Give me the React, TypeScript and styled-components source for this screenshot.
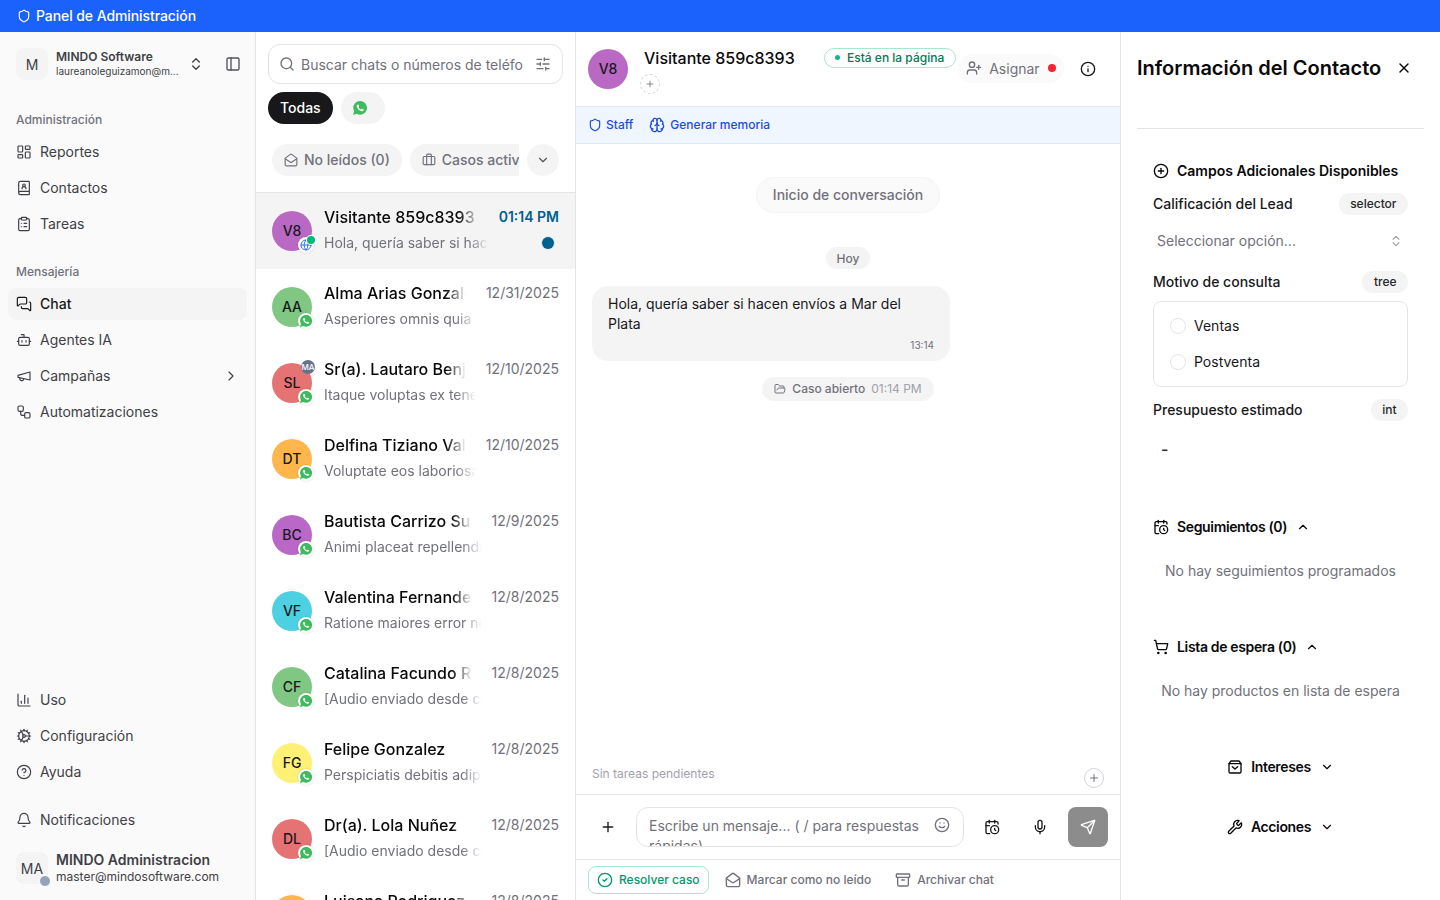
import React from "react";
import styled, { createGlobalStyle } from "styled-components";
import {
  Archive,
  Bell,
  Bot,
  BookUser,
  Brain,
  Briefcase,
  CalendarClock,
  ChartColumn,
  ChevronDown,
  ChevronRight,
  ChevronUp,
  ChevronsUpDown,
  CircleCheck,
  CircleHelp,
  CirclePlus,
  ClipboardList,
  Cog,
  FolderOpen,
  Globe,
  Info,
  LayoutDashboard,
  MailOpen,
  MessagesSquare,
  Mic,
  PanelLeft,
  Plus,
  Search,
  Send,
  Shield,
  ShoppingCart,
  SlidersHorizontal,
  Smile,
  UserPlus,
  Workflow,
  Wrench,
  X,
} from "lucide-react";
import { IoLogoWhatsapp } from "react-icons/io";

const GlobalStyle = createGlobalStyle`
  html, body {
    margin: 0;
    padding: 0;
    height: 100%;
    overflow: hidden;
    background: #fff;
    font-family: Inter, "Liberation Sans", sans-serif;
    color: #09090b;
  }
  * { box-sizing: border-box; }
`;

const chats = [
  { initials: "V8", color: "#b968c4", name: "Visitante 859c8393", preview: "Hola, quería saber si hacen envíos a Mar del Plata", date: "01:14 PM", active: true },
  { initials: "AA", color: "#81c784", name: "Alma Arias Gonzalez", preview: "Asperiores omnis quia dolorem", date: "12/31/2025" },
  { initials: "SL", color: "#e57373", name: "Sr(a). Lautaro Benjamín", preview: "Itaque voluptas ex tenetur sint", date: "12/10/2025", agent: true },
  { initials: "DT", color: "#ffb74d", name: "Delfina Tiziano Valdez", preview: "Voluptate eos laboriosam quod", date: "12/10/2025" },
  { initials: "BC", color: "#ba68c8", name: "Bautista Carrizo Suárez", preview: "Animi placeat repellendus nemo", date: "12/9/2025" },
  { initials: "VF", color: "#4dd0e1", name: "Valentina Fernandez", preview: "Ratione maiores error nobis quia", date: "12/8/2025" },
  { initials: "CF", color: "#81c784", name: "Catalina Facundo Ruiz", preview: "[Audio enviado desde chat]", date: "12/8/2025" },
  { initials: "FG", color: "#fff176", name: "Felipe Gonzalez", preview: "Perspiciatis debitis adipisci sit", date: "12/8/2025" },
  { initials: "DL", color: "#e57373", name: "Dr(a). Lola Nuñez", preview: "[Audio enviado desde chat]", date: "12/8/2025" },
  { initials: "LR", color: "#ffb74d", name: "Luisana Rodriguez", preview: "Quasi rerum dolores", date: "12/8/2025" },
];

const NAV_STROKE = 1.75;

const MegaphoneIcon: React.FC = () => (
  <svg width="16" height="16" viewBox="0 0 24 24" fill="none" stroke="currentColor" strokeWidth={NAV_STROKE} strokeLinecap="round" strokeLinejoin="round">
    <path d="m3 11 18-5v12L3 14v-3z" />
    <path d="M11.6 16.8a3 3 0 1 1-5.8-1.6" />
  </svg>
);

const BagIcon: React.FC = () => (
  <svg width="16" height="16" viewBox="0 0 24 24" fill="none" stroke="currentColor" strokeWidth="2" strokeLinecap="round" strokeLinejoin="round">
    <path d="M6 3h12l3 4v12a2 2 0 0 1-2 2H5a2 2 0 0 1-2-2V7z" />
    <path d="M3 7h18" />
    <path d="M8 11.5l4 3.5 4-3.5" />
  </svg>
);

const App: React.FC = () => (
  <>
    <GlobalStyle />
    <Page>
      <TopBar>
        <Shield size={14} strokeWidth={2} />
        Panel de Administración
      </TopBar>
      <Columns>
        <Sidebar>
          <AccountRow>
            <SquareAvatar>M</SquareAvatar>
            <AccountText>
              <AccountName>MINDO Software</AccountName>
              <AccountMail>laureanoleguizamon@m...</AccountMail>
            </AccountText>
            <ChevronsUpDown size={16} color="#3f3f46" />
            <PanelButton>
              <PanelLeft size={16} color="#52525b" />
            </PanelButton>
          </AccountRow>

          <SectionLabel>Administración</SectionLabel>
          <NavItem><LayoutDashboard size={16} strokeWidth={NAV_STROKE} />Reportes</NavItem>
          <NavItem><BookUser size={16} strokeWidth={NAV_STROKE} />Contactos</NavItem>
          <NavItem><ClipboardList size={16} strokeWidth={NAV_STROKE} />Tareas</NavItem>

          <SectionLabel $gap={12}>Mensajería</SectionLabel>
          <NavItem $active><MessagesSquare size={16} strokeWidth={NAV_STROKE} />Chat</NavItem>
          <NavItem><Bot size={16} strokeWidth={NAV_STROKE} />Agentes IA</NavItem>
          <NavItem>
            <MegaphoneIcon />
            Campañas
            <NavChevron><ChevronRight size={16} strokeWidth={NAV_STROKE} /></NavChevron>
          </NavItem>
          <NavItem><Workflow size={16} strokeWidth={NAV_STROKE} />Automatizaciones</NavItem>

          <Spacer />

          <NavItem><ChartColumn size={16} strokeWidth={NAV_STROKE} />Uso</NavItem>
          <NavItem><Cog size={16} strokeWidth={NAV_STROKE} />Configuración</NavItem>
          <NavItem><CircleHelp size={16} strokeWidth={NAV_STROKE} />Ayuda</NavItem>
          <NavItem $gapTop={12}><Bell size={16} strokeWidth={NAV_STROKE} />Notificaciones</NavItem>

          <UserRow>
            <SquareAvatar>
              MA
              <PresenceDot />
            </SquareAvatar>
            <AccountText>
              <UserName>MINDO Administracion</UserName>
              <UserMail>master@mindosoftware.com</UserMail>
            </AccountText>
          </UserRow>
        </Sidebar>

        <ChatList>
          <ListTop>
            <SearchBox>
              <Search size={16} color="#71717a" />
              <SearchText>Buscar chats o números de teléfono</SearchText>
              <SlidersHorizontal size={16} color="#71717a" />
            </SearchBox>
            <ChannelRow>
              <ChannelPill $active>Todas</ChannelPill>
              <ChannelPill>
                <WhatsappMark><IoLogoWhatsapp size={16} color="#3fba5f" /></WhatsappMark>
              </ChannelPill>
            </ChannelRow>
            <FilterRow>
              <FilterScroll>
                <FilterPill><MailOpen size={14} />No leídos (0)</FilterPill>
                <FilterPill><Briefcase size={14} />Casos activos (1)</FilterPill>
              </FilterScroll>
              <RoundButton><ChevronDown size={14} /></RoundButton>
            </FilterRow>
          </ListTop>
          <Rows>
            {chats.map((chat) => (
              <ChatRow key={chat.initials + chat.name} $active={chat.active}>
                <Avatar $color={chat.color} $size={40}>
                  {chat.initials}
                  {chat.agent && <AgentBadge>MA</AgentBadge>}
                  <ChannelBadge>
                    {chat.active ? (
                      <Globe size={12} color="#2f6fed" />
                    ) : (
                      <IoLogoWhatsapp size={14} color="#3fba5f" />
                    )}
                  </ChannelBadge>
                  {chat.active && <OnlineDot />}
                </Avatar>
                <RowText>
                  <RowName>{chat.name}</RowName>
                  <RowPreview>{chat.preview}</RowPreview>
                </RowText>
                <RowMeta>
                  <RowDate $active={chat.active}>{chat.date}</RowDate>
                  {chat.active && <UnreadDot />}
                </RowMeta>
              </ChatRow>
            ))}
          </Rows>
        </ChatList>

        <Conversation>
          <ConvHeader>
            <Avatar $color="#b968c4" $size={40}>V8</Avatar>
            <ConvTitle>
              <ConvName>Visitante 859c8393</ConvName>
              <AddTag><Plus size={10} /></AddTag>
            </ConvTitle>
            <PresenceBadge><GreenDot />Está en la página</PresenceBadge>
            <AssignPill>
              <UserPlus size={16} />
              Asignar
              <RedDot />
            </AssignPill>
            <InfoButton><Info size={16} /></InfoButton>
          </ConvHeader>
          <StaffBar>
            <StaffLink><Shield size={14} />Staff</StaffLink>
            <StaffLink><Brain size={16} />Generar memoria</StaffLink>
          </StaffBar>
          <Messages>
            <StartPill>Inicio de conversación</StartPill>
            <DayPill>Hoy</DayPill>
            <Bubble>
              Hola, quería saber si hacen envíos a Mar del Plata
              <BubbleTime>13:14</BubbleTime>
            </Bubble>
            <CasePill>
              <FolderOpen size={12} />
              Caso abierto
              <CaseTime>01:14 PM</CaseTime>
            </CasePill>
          </Messages>
          <TasksBar>
            Sin tareas pendientes
            <TaskAdd><Plus size={12} /></TaskAdd>
          </TasksBar>
          <Composer>
            <ComposerIcon $width={40}><Plus size={16} /></ComposerIcon>
            <MessageBox>
              <MessageText>Escribe un mensaje... ( / para respuestas rápidas)</MessageText>
              <SmileSlot><Smile size={16} color="#71717a" /></SmileSlot>
            </MessageBox>
            <ComposerIcon $width={48}><CalendarClock size={16} /></ComposerIcon>
            <ComposerIcon $width={48}><Mic size={16} /></ComposerIcon>
            <SendButton><Send size={16} /></SendButton>
          </Composer>
          <ActionsBar>
            <ResolveButton><CircleCheck size={16} />Resolver caso</ResolveButton>
            <PlainAction><MailOpen size={16} />Marcar como no leído</PlainAction>
            <PlainAction><Archive size={16} />Archivar chat</PlainAction>
          </ActionsBar>
        </Conversation>

        <ContactPanel>
          <PanelHead>
            <PanelTitle>Información del Contacto</PanelTitle>
            <X size={16} />
          </PanelHead>
          <PanelBody>
            <BlockTitle $top={32}><CirclePlus size={16} />Campos Adicionales Disponibles</BlockTitle>

            <FieldHead $top={12}>Calificación del Lead<TypeTag>selector</TypeTag></FieldHead>
            <SelectRow>
              Seleccionar opción...
              <ChevronsUpDown size={14} color="#a1a1aa" />
            </SelectRow>

            <FieldHead $top={12}>Motivo de consulta<TypeTag>tree</TypeTag></FieldHead>
            <TreeBox>
              <TreeOption><Radio />Ventas</TreeOption>
              <TreeOption><Radio />Postventa</TreeOption>
            </TreeBox>

            <FieldHead $top={12}>Presupuesto estimado<TypeTag>int</TypeTag></FieldHead>
            <FieldValue>-</FieldValue>

            <BlockTitle $top={58} $tight>
              <CalendarClock size={16} />Seguimientos (0)<ChevronUp size={14} />
            </BlockTitle>
            <EmptyNote>No hay seguimientos programados</EmptyNote>

            <BlockTitle $top={56} $tight>
              <ShoppingCart size={16} />Lista de espera (0)<ChevronUp size={14} />
            </BlockTitle>
            <EmptyNote>No hay productos en lista de espera</EmptyNote>

            <BlockTitle $top={56} $center $tight>
              <BagIcon />Intereses<ChevronDown size={14} />
            </BlockTitle>
            <BlockTitle $top={40} $center $tight>
              <Wrench size={16} />Acciones<ChevronDown size={14} />
            </BlockTitle>
          </PanelBody>
        </ContactPanel>
      </Columns>
    </Page>
  </>
);

const Page = styled.div`
  width: 100%;
  height: 100vh;
  display: flex;
  flex-direction: column;
  overflow: hidden;
`;

const TopBar = styled.div`
  height: 32px;
  flex: none;
  display: flex;
  align-items: center;
  gap: 5px;
  padding: 0 16px 1px 17px;
  background: #1a62fb;
  color: #fff;
  font-size: 14px;
  font-weight: 500;
  letter-spacing: -0.08px;
`;

const Columns = styled.div`
  flex: 1;
  min-height: 0;
  display: flex;
`;

const Sidebar = styled.aside`
  width: 256px;
  flex: none;
  display: flex;
  flex-direction: column;
  padding: 16px 8px;
  background: #fafafa;
  border-right: 1px solid #e4e4e7;
`;

const AccountRow = styled.div`
  height: 32px;
  flex: none;
  display: flex;
  align-items: center;
  gap: 8px;
  padding: 0 8px;
  margin-bottom: 24px;
`;

const SquareAvatar = styled.div`
  position: relative;
  width: 32px;
  height: 32px;
  flex: none;
  display: flex;
  align-items: center;
  justify-content: center;
  border-radius: 8px;
  background: #f4f4f5;
  font-size: 14px;
  color: #3f3f46;
`;

const AccountText = styled.div`
  flex: 1;
  min-width: 0;
  display: flex;
  flex-direction: column;
`;

const AccountName = styled.div`
  font-size: 12px;
  line-height: 14px;
  font-weight: 600;
  color: #3f3f46;
`;

const AccountMail = styled.div`
  font-size: 10px;
  line-height: 14px;
  color: #3f3f46;
  white-space: nowrap;
`;

const PanelButton = styled.div`
  width: 16px;
  height: 16px;
  margin-left: 13px;
  margin-right: -2px;
`;

const SectionLabel = styled.div<{ $gap?: number }>`
  height: 32px;
  flex: none;
  display: flex;
  align-items: center;
  padding: 0 8px 2px;
  margin-top: ${(p) => p.$gap ?? 0}px;
  font-size: 12px;
  font-weight: 500;
  color: #71717a;
`;

const NavItem = styled.div<{ $active?: boolean; $gapTop?: number }>`
  height: 32px;
  flex: none;
  display: flex;
  align-items: center;
  gap: 8px;
  padding: 0 8px 1px;
  margin-bottom: 4px;
  margin-top: ${(p) => p.$gapTop ?? 0}px;
  border-radius: 8px;
  font-size: 14px;
  font-weight: ${(p) => (p.$active ? 500 : 400)};
  color: ${(p) => (p.$active ? "#18181b" : "#3f3f46")};
  background: ${(p) => (p.$active ? "#f4f4f5" : "transparent")};
`;

const NavChevron = styled.span`
  display: flex;
  margin-left: auto;
`;

const Spacer = styled.div`
  flex: 1;
`;

const UserRow = styled.div`
  display: flex;
  align-items: center;
  gap: 8px;
  padding: 0 8px;
  margin: 12px 0 0;
  height: 32px;
`;

const UserName = styled.div`
  font-size: 14px;
  line-height: 18px;
  font-weight: 600;
  color: #3f3f46;
  white-space: nowrap;
`;

const UserMail = styled.div`
  font-size: 12px;
  line-height: 16px;
  color: #3f3f46;
  white-space: nowrap;
`;

const PresenceDot = styled.span`
  position: absolute;
  right: -3px;
  bottom: -3px;
  width: 12px;
  height: 12px;
  border-radius: 50%;
  background: #94a3b8;
  border: 1px solid #fff;
`;

const ChatList = styled.section`
  width: 320px;
  flex: none;
  display: flex;
  flex-direction: column;
  border-right: 1px solid #e4e4e7;
`;

const ListTop = styled.div`
  height: 161px;
  flex: none;
  padding: 12px 12px 0;
  border-bottom: 1px solid #e4e4e7;
`;

const SearchBox = styled.div`
  width: 295px;
  height: 40px;
  display: flex;
  align-items: center;
  gap: 6px;
  padding: 0 11px 0 10px;
  border: 1px solid #e4e4e7;
  border-radius: 12px;
`;

const SearchText = styled.div`
  flex: 1;
  min-width: 0;
  overflow: hidden;
  white-space: nowrap;
  font-size: 14px;
  color: #71717a;
  margin-right: 6px;
`;

const ChannelRow = styled.div`
  display: flex;
  gap: 8px;
  margin-top: 8px;
`;

const ChannelPill = styled.div<{ $active?: boolean }>`
  height: 32px;
  min-width: 44px;
  display: flex;
  align-items: center;
  justify-content: center;
  padding: 0 12px 1px;
  border-radius: 16px;
  font-size: 14px;
  font-weight: 500;
  color: ${(p) => (p.$active ? "#fff" : "#3f3f46")};
  background: ${(p) => (p.$active ? "#18181b" : "#f4f4f5")};
`;

const WhatsappMark = styled.span`
  display: flex;
  margin: 0 5px 0 -1px;
`;

const FilterRow = styled.div`
  display: flex;
  align-items: center;
  gap: 8px;
  margin: 20px 4px 0;
`;

const FilterScroll = styled.div`
  width: 247px;
  display: flex;
  gap: 8px;
  overflow: hidden;
`;

const FilterPill = styled.div`
  height: 32px;
  flex: none;
  display: flex;
  align-items: center;
  gap: 6px;
  padding: 0 12px 1px;
  border-radius: 16px;
  background: #f4f4f5;
  font-size: 14px;
  font-weight: 500;
  color: #71717a;
  white-space: nowrap;
`;

const RoundButton = styled.div`
  width: 32px;
  height: 32px;
  flex: none;
  display: flex;
  align-items: center;
  justify-content: center;
  border-radius: 50%;
  background: #f4f4f5;
  color: #52525b;
`;

const Rows = styled.div`
  flex: 1;
  min-height: 0;
  overflow: hidden;
`;

const ChatRow = styled.div<{ $active?: boolean }>`
  height: 76px;
  display: flex;
  align-items: flex-start;
  padding: 18px 16px 0;
  gap: 12px;
  background: ${(p) => (p.$active ? "#f4f4f5" : "#fff")};
`;

const Avatar = styled.div<{ $color: string; $size: number }>`
  position: relative;
  width: ${(p) => p.$size}px;
  height: ${(p) => p.$size}px;
  flex: none;
  display: flex;
  align-items: center;
  justify-content: center;
  padding-bottom: 1px;
  border-radius: 50%;
  background: ${(p) => p.$color};
  font-size: 14px;
  font-weight: 500;
  color: #18181b;
`;

const ChannelBadge = styled.span`
  position: absolute;
  right: -2px;
  bottom: -2px;
  width: 16px;
  height: 16px;
  display: flex;
  align-items: center;
  justify-content: center;
  border-radius: 50%;
  background: #fff;
  box-shadow: 0 0 2px rgba(0, 0, 0, 0.2);
`;

const OnlineDot = styled.span`
  position: absolute;
  right: -3px;
  bottom: 7px;
  width: 8px;
  height: 8px;
  border-radius: 50%;
  background: #00b878;
  box-shadow: 0 0 0 1px #fff;
`;

const AgentBadge = styled.span`
  position: absolute;
  right: -3px;
  top: -3px;
  width: 14px;
  height: 14px;
  display: flex;
  align-items: center;
  justify-content: center;
  border-radius: 50%;
  background: #64748b;
  color: #fff;
  font-size: 8px;
  font-weight: 500;
`;

const RowText = styled.div`
  flex: 1;
  min-width: 0;
  margin-top: -6px;
`;

const fade = `
  white-space: nowrap;
  overflow: hidden;
  -webkit-mask-image: linear-gradient(to right, #000 calc(100% - 20px), transparent);
  mask-image: linear-gradient(to right, #000 calc(100% - 20px), transparent);
`;

const RowName = styled.div`
  ${fade}
  margin-right: 10px;
  font-size: 16px;
  line-height: 24px;
  font-weight: 500;
  color: #09090b;
`;

const RowPreview = styled.div`
  ${fade}
  margin-top: 4px;
  font-size: 14px;
  line-height: 20px;
  color: #71717a;
`;

const RowMeta = styled.div`
  flex: none;
  display: flex;
  flex-direction: column;
  align-items: flex-end;
  margin: -4px 0 0 -2px;
`;

const RowDate = styled.div<{ $active?: boolean }>`
  font-size: 14px;
  line-height: 20px;
  font-weight: ${(p) => (p.$active ? 600 : 400)};
  color: ${(p) => (p.$active ? "#005f8c" : "#71717a")};
`;

const UnreadDot = styled.span`
  width: 12px;
  height: 12px;
  margin: 10px 5px 0 0;
  border-radius: 50%;
  background: #005f8c;
  box-shadow: 0 0 0 1px #dbe7ef;
`;

const Conversation = styled.main`
  width: 544px;
  flex: none;
  display: flex;
  flex-direction: column;
`;

const ConvHeader = styled.header`
  height: 74px;
  flex: none;
  display: flex;
  align-items: center;
  padding: 0 12px;
`;

const ConvTitle = styled.div`
  width: 155px;
  height: 100%;
  display: flex;
  flex-direction: column;
  align-items: flex-start;
  margin-left: 12px;
  padding-top: 14px;
`;

const ConvName = styled.div`
  margin-left: 4px;
  font-size: 16px;
  line-height: 24px;
  font-weight: 500;
  white-space: nowrap;
`;

const AddTag = styled.span`
  width: 20px;
  height: 20px;
  margin-top: 4px;
  display: flex;
  align-items: center;
  justify-content: center;
  border-radius: 50%;
  border: 1px dashed #d4d4d8;
  color: #71717a;
`;

const PresenceBadge = styled.div`
  align-self: flex-start;
  height: 20px;
  margin: 16px 0 0 29px;
  display: flex;
  align-items: center;
  gap: 7px;
  padding: 0 11px 1px 10px;
  border: 1px solid #a7e8cd;
  border-radius: 10px;
  background: #fff;
  font-size: 12px;
  font-weight: 500;
  color: #047857;
  white-space: nowrap;
`;

const GreenDot = styled.span`
  width: 5px;
  height: 5px;
  border-radius: 50%;
  background: #10b981;
`;

const AssignPill = styled.div`
  height: 29px;
  margin: 0 0 2px 2px;
  display: flex;
  align-items: center;
  gap: 7px;
  padding: 0 8px;
  border-radius: 15px;
  background: #fafafa;
  font-size: 14px;
  color: #71717a;
  white-space: nowrap;
`;

const RedDot = styled.span`
  width: 8px;
  height: 8px;
  margin-left: 1px;
  border-radius: 50%;
  background: #f8232f;
`;

const InfoButton = styled.div`
  width: 32px;
  height: 32px;
  margin-left: 8px;
  display: flex;
  align-items: center;
  justify-content: center;
  color: #18181b;
`;

const StaffBar = styled.div`
  height: 38px;
  flex: none;
  display: flex;
  align-items: center;
  gap: 16px;
  padding: 0 12px 1px;
  background: #eff6ff;
  border-top: 1px solid #e4e4e7;
  border-bottom: 1px solid #dbeafe;
`;

const StaffLink = styled.div`
  display: flex;
  align-items: center;
  gap: 5px;
  font-size: 12px;
  font-weight: 500;
  color: #1d4ed8;

  &:first-child {
    gap: 4px;
  }
`;

const Messages = styled.div`
  flex: 1;
  min-height: 0;
  display: flex;
  flex-direction: column;
  align-items: center;
  padding: 33px 16px 0;
`;

const StartPill = styled.div`
  height: 36px;
  display: flex;
  align-items: center;
  padding: 0 16px 1px;
  border-radius: 18px;
  border: 1px solid #f4f4f5;
  background: #fafafa;
  font-size: 14px;
  font-weight: 500;
  color: #71717a;
`;

const DayPill = styled.div`
  height: 22px;
  margin-top: 34px;
  display: flex;
  align-items: center;
  padding: 0 11px;
  border-radius: 11px;
  background: #f4f4f5;
  font-size: 12px;
  font-weight: 500;
  color: #71717a;
`;

const Bubble = styled.div`
  align-self: flex-start;
  width: 358px;
  height: 75px;
  margin-top: 17px;
  padding: 8px 16px 0;
  border-radius: 16px;
  background: #f4f4f5;
  font-size: 14px;
  line-height: 20px;
  color: #18181b;
`;

const BubbleTime = styled.div`
  margin-top: 4px;
  text-align: right;
  font-size: 10px;
  line-height: 14px;
  color: #71717a;
`;

const CasePill = styled.div`
  height: 24px;
  margin-top: 16px;
  display: flex;
  align-items: center;
  gap: 6px;
  padding: 0 12px 1px;
  border-radius: 12px;
  background: #f4f4f5;
  font-size: 12px;
  font-weight: 500;
  color: #71717a;
`;

const CaseTime = styled.span`
  font-weight: 400;
  color: #a1a1aa;
`;

const TasksBar = styled.div`
  height: 45px;
  flex: none;
  display: flex;
  align-items: flex-start;
  justify-content: space-between;
  padding: 16px 16px 0;
  font-size: 12px;
  line-height: 16px;
  color: #a1a1aa;
  border-bottom: 1px solid #e4e4e7;
`;

const TaskAdd = styled.span`
  width: 20px;
  height: 20px;
  margin-top: 2px;
  display: flex;
  align-items: center;
  justify-content: center;
  border-radius: 50%;
  border: 1px solid #d4d4d8;
  color: #71717a;
`;

const Composer = styled.div`
  height: 65px;
  flex: none;
  display: flex;
  align-items: center;
  padding: 0 12px;
  border-bottom: 1px solid #e4e4e7;
`;

const ComposerIcon = styled.div<{ $width: number }>`
  width: ${(p) => p.$width}px;
  flex: none;
  display: flex;
  justify-content: center;
  color: #18181b;
`;

const MessageBox = styled.div`
  width: 328px;
  height: 40px;
  flex: none;
  display: flex;
  align-items: flex-start;
  gap: 8px;
  padding: 8px 13px 0 12px;
  margin: 0 4px 0 8px;
  border: 1px solid #e4e4e7;
  border-radius: 12px;
  overflow: hidden;
`;

const MessageText = styled.div`
  flex: 1;
  font-size: 14px;
  line-height: 20px;
  color: #71717a;
`;

const SmileSlot = styled.span`
  display: flex;
  margin-top: 1px;
`;

const SendButton = styled.div`
  width: 40px;
  height: 40px;
  flex: none;
  display: flex;
  align-items: center;
  justify-content: center;
  margin-left: 4px;
  border-radius: 8px;
  background: #8c8c8c;
  color: #fff;
`;

const ActionsBar = styled.div`
  height: 40px;
  flex: none;
  display: flex;
  align-items: center;
  gap: 16px;
  padding: 0 12px 1px;
`;

const ResolveButton = styled.div`
  height: 28px;
  display: flex;
  align-items: center;
  gap: 6px;
  padding: 0 8px;
  border: 1px solid #a7e8cd;
  border-radius: 8px;
  font-size: 12px;
  font-weight: 500;
  color: #059669;
  white-space: nowrap;
`;

const PlainAction = styled.div`
  display: flex;
  align-items: center;
  gap: 6px;
  font-size: 12px;
  font-weight: 500;
  color: #71717a;
  white-space: nowrap;

  & + & {
    margin-left: 8px;
  }
`;

const ContactPanel = styled.aside`
  flex: 1;
  min-width: 0;
  display: flex;
  flex-direction: column;
  padding: 16px 16px 0;
  border-left: 1px solid #e4e4e7;
`;

const PanelHead = styled.div`
  height: 40px;
  flex: none;
  display: flex;
  align-items: center;
  gap: 15px;
`;

const PanelTitle = styled.h2`
  margin: 0;
  font-size: 20px;
  font-weight: 600;
  white-space: nowrap;
`;

const PanelBody = styled.div`
  margin-top: 40px;
  padding: 0 16px;
  border-top: 1px solid #e4e4e7;
`;

const BlockTitle = styled.div<{ $top: number; $center?: boolean; $tight?: boolean }>`
  height: 20px;
  margin-top: ${(p) => p.$top}px;
  display: flex;
  align-items: center;
  justify-content: ${(p) => (p.$center ? "center" : "flex-start")};
  gap: 8px;
  padding-bottom: 1px;
  font-size: 14px;
  font-weight: 600;
  letter-spacing: ${(p) => (p.$tight ? "-0.35px" : "0")};
  white-space: nowrap;

  & > svg:last-child:not(:first-child) {
    margin-left: ${(p) => (p.$tight ? "1px" : "0")};
  }
`;

const FieldHead = styled.div<{ $top: number }>`
  height: 22px;
  margin-top: ${(p) => p.$top}px;
  display: flex;
  align-items: center;
  justify-content: space-between;
  padding-bottom: 1px;
  font-size: 14px;
  font-weight: 500;
  color: #18181b;
`;

const TypeTag = styled.span`
  height: 22px;
  display: flex;
  align-items: center;
  margin-bottom: -1px;
  padding: 0 11.5px 1px;
  border-radius: 11px;
  background: #f4f4f5;
  font-size: 12px;
  font-weight: 500;
  color: #27272a;
`;

const SelectRow = styled.div`
  height: 36px;
  margin-top: 8px;
  display: flex;
  align-items: center;
  justify-content: space-between;
  padding: 0 5px 1px 4px;
  font-size: 14px;
  color: #71717a;
`;

const TreeBox = styled.div`
  height: 86px;
  margin-top: 8px;
  padding: 6px 16px;
  border: 1px solid #e4e4e7;
  border-radius: 8px;
`;

const TreeOption = styled.div`
  height: 36px;
  display: flex;
  align-items: center;
  gap: 8px;
  padding-bottom: 1px;
  font-size: 14px;
  color: #18181b;
`;

const Radio = styled.span`
  width: 16px;
  height: 16px;
  border: 1px solid #e4e4e7;
  border-radius: 50%;
`;

const FieldValue = styled.div`
  height: 20px;
  margin-top: 18px;
  padding-left: 8px;
  font-size: 16px;
  font-weight: 500;
  line-height: 20px;
  color: #27272a;
`;

const EmptyNote = styled.div`
  height: 20px;
  margin-top: 24px;
  text-align: center;
  font-size: 14px;
  line-height: 20px;
  color: #71717a;
  white-space: nowrap;
`;

export default App;
